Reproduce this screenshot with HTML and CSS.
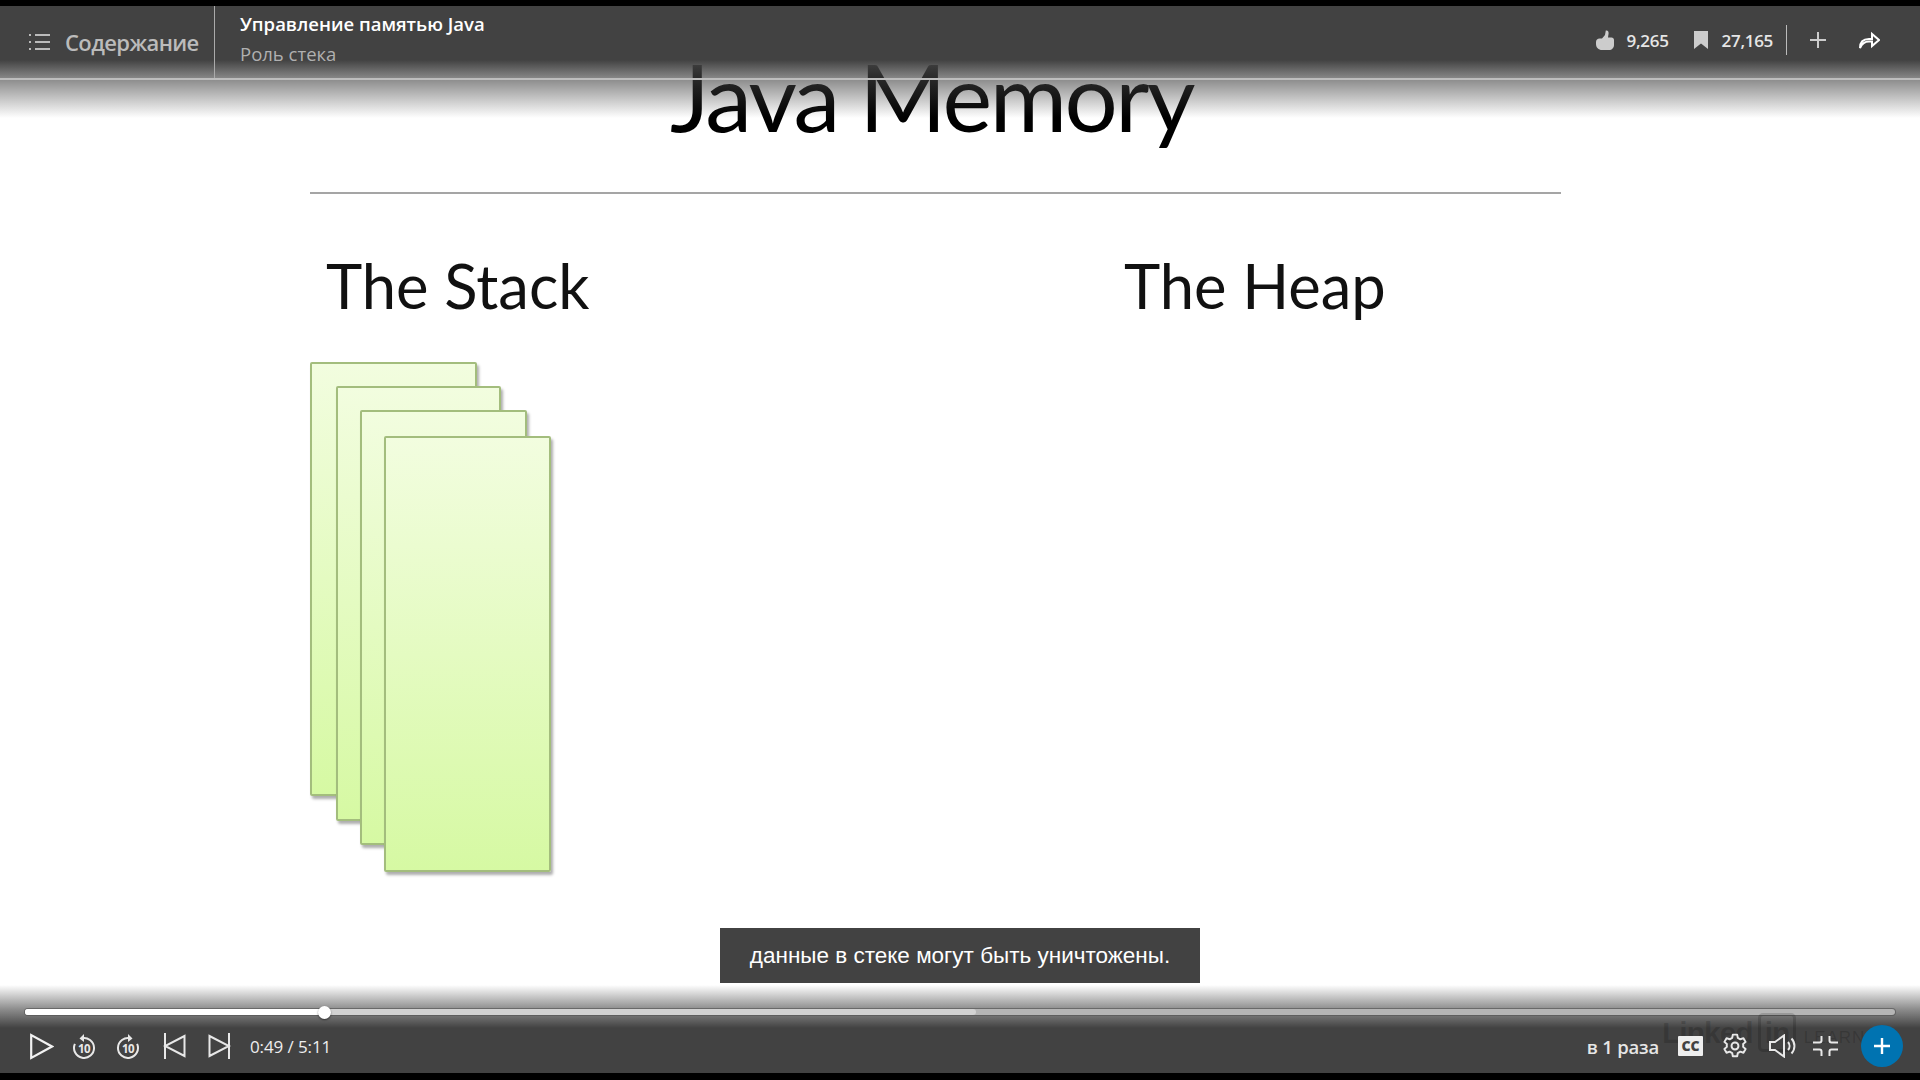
FILE: index.html
```html
<!DOCTYPE html>
<html>
  <head>
    <meta charset="utf-8">
    <link rel="stylesheet" href="styles.css">
    <title>Роль стека</title>
  </head>
  <body>
    <div class="player">
      <div class="slide">
        <h1 class="slide-title">Java Memory</h1>
        <div class="slide-rule"></div>
        <div class="slide-cols">
          <h2>The Stack</h2>
          <h2>The Heap</h2>
        </div>
        <div class="stack">
          <div class="frame frame1"></div>
          <div class="frame frame2"></div>
          <div class="frame frame3"></div>
          <div class="frame frame4"></div>
        </div>
      </div>

      <div class="topbar">
        <div class="toc">
          <svg width="24" height="24" viewBox="0 0 24 24" fill="none" stroke="#bbb" stroke-width="2">
            <path d="M8 5h15M8 12h15M8 19h15"/>
            <path d="M2 5h2M2 12h2M2 19h2"/>
          </svg>
          <span>Содержание</span>
        </div>
        <div class="course">
          <div class="course-name">Управление памятью Java</div>
          <div class="course-part">Роль стека</div>
        </div>
        <div class="top-actions">
          <svg class="like" width="18" height="20" viewBox="0 0 18 20" fill="#ccc">
            <path d="M0 12c0-2 1.500-3.500 3.500-3.500h2.500L9 5 9.800 .6c1.800-.6 2.900.8 2.800 2.600l-.6 4.300h3.500c1.500 0 2.500 1 2.500 2.400v5c0 2.900-2 5-5 5H6c-3.500 0-6-2.500-6-6z"/>
          </svg>
          <span class="count like-count">9,265</span>
          <svg class="mark" width="14" height="18" viewBox="0 0 14 18" fill="#ccc">
            <path d="M0 0h14v18l-7-5.500L0 18z"/>
          </svg>
          <span class="count">27,165</span>
          <div class="top-sep"></div>
          <svg class="add" width="16" height="16" viewBox="0 0 16 16" stroke="#ccc" stroke-width="2">
            <path d="M8 0v16M0 8h16"/>
          </svg>
          <svg class="share" width="21" height="18" viewBox="0 0 21 18" fill="none" stroke="#fff" stroke-width="2">
            <path d="M1 17c0-6 3-9 9-9h3V3l7 6-7 6v-4.500h-3c-4 0-7 2-9 6.500z"/>
          </svg>
        </div>
      </div>

      <div class="caption">данные в стеке могут быть уничтожены.</div>

      <div class="bottombar">
        <div class="track">
          <div class="buffered"></div>
          <div class="played"></div>
          <div class="knob"></div>
        </div>
        <div class="watermark">Linked<b>in</b> <span>LEARNING</span></div>
        <div class="controls">
          <svg class="play" width="24" height="27" viewBox="0 0 24 27" fill="none" stroke="#f2f2f2" stroke-width="2.200">
            <path d="M1.200 2v23L22 13.500z"/>
          </svg>
          <svg class="skip" width="24" height="26" viewBox="0 0 24 26" fill="none" stroke="#e8e8e8" stroke-width="2">
            <path d="M9.500 5.300A10 10 0 1 1 2.900 10.900"/>
            <path d="M12 1L7.500 5.500 12 9" fill="#e8e8e8" stroke="none"/>
            <text x="12" y="19.500" text-anchor="middle" class="skip-num">10</text>
          </svg>
          <svg class="skip skip-fwd" width="24" height="26" viewBox="0 0 24 26" fill="none" stroke="#e8e8e8" stroke-width="2">
            <path d="M14.500 5.300A10 10 0 1 0 21.100 10.900"/>
            <path d="M12 1l4.500 4.500L12 9" fill="#e8e8e8" stroke="none"/>
            <text x="12" y="19.500" text-anchor="middle" class="skip-num">10</text>
          </svg>
          <svg class="chapter" width="23" height="26" viewBox="0 0 23 26" fill="none" stroke="#e8e8e8" stroke-width="2">
            <path d="M2 0v26"/>
            <path d="M21.500 3v20L2 13z"/>
          </svg>
          <svg class="chapter chapter-next" width="23" height="26" viewBox="0 0 23 26" fill="none" stroke="#e8e8e8" stroke-width="2">
            <path d="M21 0v26"/>
            <path d="M1.500 3v20L21 13z"/>
          </svg>
          <span class="time">0:49 / 5:11</span>
          <span class="speed">в 1 раза</span>
          <span class="cc">CC</span>
          <svg class="gear" width="26" height="26" viewBox="0 0 24 24" fill="none" stroke="#e8e8e8" stroke-width="1.800" stroke-linejoin="round">
            <circle cx="12" cy="12" r="3.200"/>
            <path d="M10 1.500h4l.6 3 2.300 1.300 2.900-1 2 3.400-2.300 2a8 8 0 0 1 0 2.600l2.300 2-2 3.400-2.900-1-2.300 1.300-.6 3h-4l-.6-3-2.300-1.300-2.900 1-2-3.400 2.300-2a8 8 0 0 1 0-2.600l-2.300-2 2-3.400 2.900 1 2.300-1.300z"/>
          </svg>
          <svg class="volume" width="27" height="24" viewBox="0 0 27 24" fill="none" stroke="#e8e8e8" stroke-width="2">
            <path d="M1 8h5l9-6.500v21L6 16H1z"/>
            <path d="M19 8a6 6 0 0 1 0 8M22.500 4.500a11 11 0 0 1 0 15"/>
          </svg>
          <svg class="shrink" width="25" height="20" viewBox="0 0 25 20" fill="none" stroke="#e8e8e8" stroke-width="2">
            <path d="M0 6.500h6.500a2 2 0 0 0 2-2V0M25 6.500h-6.500a2 2 0 0 1-2-2V0M0 13.500h6.500a2 2 0 0 1 2 2V20M25 13.500h-6.500a2 2 0 0 0-2 2V20"/>
          </svg>
          <div class="fab">
            <svg width="16" height="16" viewBox="0 0 16 16" stroke="#fff" stroke-width="2.400">
              <path d="M8 0v16M0 8h16"/>
            </svg>
          </div>
        </div>
      </div>
      <div class="edge edge-top"></div>
      <div class="edge edge-bottom"></div>
    </div>
  </body>
</html>
```

FILE: styles.css
```css
html, body {
	margin: 0;
	padding: 0;
	background: #000;
}

.player {
	position: relative;
	width: 1920px;
	height: 1080px;
	overflow: hidden;
	background: #fff;
	font-family: "Open Sans", "Noto Sans", sans-serif;
}

/* Slide */
.slide {
	width: 1251px;
	margin-left: 310px;
	padding-top: 39px;
	color: #111;
	font-family: Lato, "Liberation Sans", sans-serif;
}

.slide-title {
	margin: 0 0 0 -8px;
	text-align: center;
	font-weight: 400;
	font-size: 94px;
	letter-spacing: -2.500px;
	line-height: 113px;
	height: 115px;
	color: #000;
}

.slide-rule {
	height: 2px;
	margin-top: 38px;
	background: #a5a5a5;
}

.slide-cols {
	display: flex;
	margin-top: 53px;
	padding-left: 16px;
}

.slide-cols h2 {
	flex: none;
	margin: 0;
	width: 798px;
	font-weight: 400;
	font-size: 61.500px;
	line-height: 76px;
}

.stack {
	position: relative;
	height: 510px;
	margin-top: 39px;
}

.frame {
	position: absolute;
	box-sizing: border-box;
	width: 167px;
	border: 2px solid #a3bd7d;
	border-radius: 2px;
	background: linear-gradient(#f2fddf, #d6f9a3);
	box-shadow: 2px 3px 3px rgba(0, 0, 0, .32);
}

.frame1 { left: 0; top: 0; height: 434px; }
.frame2 { left: 26px; top: 24px; height: 435px; width: 165px; }
.frame3 { left: 50px; top: 48px; height: 435px; }
.frame4 { left: 74px; top: 74px; height: 436px; }

/* Top bar */
.topbar {
	position: absolute;
	top: 0;
	left: 0;
	width: 100%;
	height: 120px;
	display: flex;
	align-items: flex-start;
	box-sizing: border-box;
	padding-top: 6px;
	background: linear-gradient(rgba(66, 66, 66, 1) 60px, rgba(66, 66, 66, .6) 80px, rgba(66, 66, 66, 0) 118px);
}

.toc {
	display: flex;
	align-items: center;
	gap: 14px;
	box-sizing: border-box;
	width: 215px;
	height: 72px;
	padding-left: 27px;
	border-right: 1px solid #aaa;
	color: #bbb;
	font-size: 22px;
	font-weight: 600;
	letter-spacing: -.6px;
}

.course {
	padding: 3px 0 0 25px;
}

.course-name {
	color: #fff;
	font-size: 18.500px;
	font-weight: 600;
	line-height: 30px;
}

.course-part {
	color: #b0b0b0;
	font-size: 18.500px;
	line-height: 29px;
}

.top-actions {
	display: flex;
	align-items: center;
	height: 68px;
	margin-left: auto;
	padding-right: 40px;
}

.count {
	color: #e6e6e6;
	font-size: 17px;
	font-weight: 600;
	letter-spacing: -.3px;
}

.like { margin-right: 13px; }
.like-count { margin-right: 25px; }
.mark { margin-right: 14px; }

.top-sep {
	width: 1px;
	height: 30px;
	margin: 0 23px 0 13px;
	background: #bbb;
}

.add { margin-right: 33px; }

/* The grey hairline under the top bar, black strips on the edges */
.topbar::after {
	content: "";
	position: absolute;
	top: 78px;
	left: 0;
	width: 100%;
	height: 2px;
	background: #bdbdbd;
}

.edge {
	position: absolute;
	left: 0;
	width: 100%;
	background: #000;
}

.edge-top { top: 0; height: 6px; }
.edge-bottom { bottom: 0; height: 7px; }

/* Subtitle */
.caption {
	position: absolute;
	left: 720px;
	top: 928px;
	width: 480px;
	height: 55px;
	background: #424242;
	color: #fff;
	text-align: center;
	font-family: "Liberation Sans", sans-serif;
	font-size: 22.500px;
	line-height: 55px;
}

/* Bottom bar */
.bottombar {
	position: absolute;
	left: 0;
	bottom: 0;
	width: 100%;
	height: 95px;
	box-sizing: border-box;
	padding: 24px 25px 0;
	background: linear-gradient(rgba(66, 66, 66, 0) 0, rgba(66, 66, 66, .6) 24px, rgba(66, 66, 66, 1) 43px);
}

.track {
	position: relative;
	height: 6px;
	border-radius: 3px;
	background: #b5b5b5;
	box-shadow: 0 0 0 1px rgba(80, 80, 80, .6);
}

.buffered {
	position: absolute;
	left: 0;
	top: 0;
	width: 951px;
	height: 6px;
	border-radius: 3px;
	background: #d2d2d2;
}

.played {
	position: absolute;
	left: 0;
	top: 0;
	width: 300px;
	height: 6px;
	border-radius: 3px;
	background: #fff;
}

.knob {
	position: absolute;
	left: 293px;
	top: -3px;
	width: 13px;
	height: 13px;
	border-radius: 50%;
	background: #fff;
	box-shadow: 0 1px 2px rgba(0, 0, 0, .5);
}

.watermark {
	position: absolute;
	left: 1662px;
	top: 31px;
	color: rgba(0, 0, 0, .16);
	font-family: "Liberation Sans", sans-serif;
	font-size: 30px;
	font-weight: 700;
	letter-spacing: -1px;
	white-space: nowrap;
}

.watermark b {
	margin-left: 5px;
	padding: 0 4px;
	border: 3px solid rgba(0, 0, 0, .16);
	border-radius: 5px;
}

.watermark span {
	font-size: 17px;
	font-weight: 400;
	letter-spacing: 1px;
}

.controls {
	position: relative;
	display: flex;
	align-items: center;
	height: 48px;
	margin-top: 7px;
	padding-left: 5px;
}

.play { margin-right: 18px; }
.skip { margin-right: 20px; }
.skip-fwd { margin-right: 23px; }
.chapter { margin-right: 22px; }
.chapter-next { margin-right: 19px; }

.skip-num {
	font-family: "Open Sans", sans-serif;
	font-size: 11.500px;
	font-weight: 700;
	letter-spacing: -.5px;
	fill: #e8e8e8;
	stroke: none;
}

.time {
	color: #eee;
	font-size: 17px;
	letter-spacing: -.1px;
}

.speed {
	margin-left: auto;
	margin-right: 19px;
	color: #e6e6e6;
	font-size: 18.500px;
	font-weight: 600;
	letter-spacing: -.2px;
}

.cc {
	width: 25px;
	height: 20px;
	margin-right: 19px;
	border-radius: 1px;
	background: #eee;
	color: #424242;
	text-align: center;
	font-size: 14px;
	font-weight: 800;
	line-height: 20px;
}

.gear { margin-right: 21px; }
.volume { margin-right: 17px; }
.shrink { margin-right: 23px; }

.fab {
	display: flex;
	align-items: center;
	justify-content: center;
	width: 42px;
	height: 42px;
	margin-right: -8px;
	border-radius: 50%;
	background: #0073b1;
}
```
